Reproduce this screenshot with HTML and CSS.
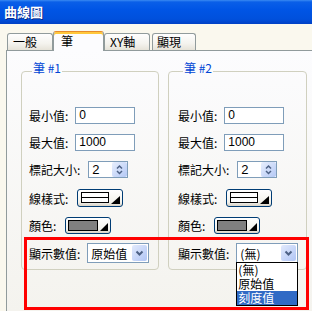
FILE: index.html
```html
<!DOCTYPE html>
<html>
  <head>
    <link rel="stylesheet" href="styles.css">
    <title>曲線圖</title>
  </head>

  <body>
    <div class="titlebar">曲線圖</div>

    <div class="client">
      <div class="tabs">
        <span class="tab tab-general">一般</span>
        <span class="tab tab-pen active">筆</span>
        <span class="tab tab-axis">XY軸</span>
        <span class="tab tab-show">顯現</span>
      </div>

      <div class="pane">
        <fieldset class="pen">
          <legend>筆 #1</legend>
          <div class="row"><span class="label">最小值:</span><span class="field">0</span></div>
          <div class="row"><span class="label">最大值:</span><span class="field">1000</span></div>
          <div class="row row-tall"><span class="label">標記大小:</span>
            <span class="spin">2<span class="spin-btn"><svg width="13" height="13" viewBox="0 0 13 13"><path d="M4 5.5 L6.5 3 L9 5.5" fill="none" stroke="#4d6185" stroke-width="1.5"/><path d="M4 8 L6.5 10.5 L9 8" fill="none" stroke="#4d6185" stroke-width="1.5"/></svg></span></span>
          </div>
          <div class="row"><span class="label">線樣式:</span>
            <span class="pick-btn pick-line"><svg width="44" height="16" viewBox="0 0 44 16"><rect x="3.5" y="2.5" width="27" height="10" fill="white" stroke="black"/><line x1="4" y1="7.5" x2="30" y2="7.5" stroke="black"/><path d="M42 6 L42 14 L33 14 Z" fill="black"/></svg></span>
          </div>
          <div class="row row-tight"><span class="label">顏色:</span>
            <span class="pick-btn pick-color"><svg width="44" height="15" viewBox="0 0 44 15"><rect x="2.5" y="2.5" width="29" height="10" fill="#808080" stroke="black"/><path d="M42 5 L42 13 L34 13 Z" fill="black"/></svg></span>
          </div>
          <div class="row"><span class="label">顯示數值:</span>
            <span class="select">原始值<span class="drop-btn"><svg width="13" height="14" viewBox="0 0 13 14"><path d="M3.5 5.5 L6.5 8.5 L9.5 5.5" fill="none" stroke="#4d6185" stroke-width="2"/></svg></span></span>
          </div>
        </fieldset>

        <fieldset class="pen pen-right">
          <legend>筆 #2</legend>
          <div class="row"><span class="label">最小值:</span><span class="field">0</span></div>
          <div class="row"><span class="label">最大值:</span><span class="field">1000</span></div>
          <div class="row row-tall"><span class="label">標記大小:</span>
            <span class="spin">2<span class="spin-btn"><svg width="13" height="13" viewBox="0 0 13 13"><path d="M4 5.5 L6.5 3 L9 5.5" fill="none" stroke="#4d6185" stroke-width="1.5"/><path d="M4 8 L6.5 10.5 L9 8" fill="none" stroke="#4d6185" stroke-width="1.5"/></svg></span></span>
          </div>
          <div class="row"><span class="label">線樣式:</span>
            <span class="pick-btn pick-line"><svg width="44" height="16" viewBox="0 0 44 16"><rect x="3.5" y="2.5" width="27" height="10" fill="white" stroke="black"/><line x1="4" y1="7.5" x2="30" y2="7.5" stroke="black"/><path d="M42 6 L42 14 L33 14 Z" fill="black"/></svg></span>
          </div>
          <div class="row row-tight"><span class="label">顏色:</span>
            <span class="pick-btn pick-color"><svg width="44" height="15" viewBox="0 0 44 15"><rect x="2.5" y="2.5" width="29" height="10" fill="#808080" stroke="black"/><path d="M42 5 L42 13 L34 13 Z" fill="black"/></svg></span>
          </div>
          <div class="row"><span class="label">顯示數值:</span>
            <span class="select">(無)<span class="drop-btn"><svg width="13" height="14" viewBox="0 0 13 14"><path d="M3.5 5.5 L6.5 8.5 L9.5 5.5" fill="none" stroke="#4d6185" stroke-width="2"/></svg></span>
              <ul class="droplist">
                <li>(無)</li>
                <li>原始值</li>
                <li class="picked">刻度值</li>
              </ul>
            </span>
          </div>
        </fieldset>

        <div class="mark"></div>
      </div>
    </div>
  </body>
</html>
```

FILE: styles.css
```css
body{
  margin: 0;
  width: 312px;
  height: 311px;
  overflow: hidden;
  background-color: #faf8ee;
  font-family: "Noto Sans CJK TC", sans-serif;
  font-size: 12px;
  color: black;
}

.titlebar{
  height: 24px;
  line-height: 24px;
  padding-left: 4px;
  background: linear-gradient(#3a8af2 0, #0a5fe8 2px, #0055e5 40%, #0050dc 80%, #0040c4 100%);
  color: white;
  font-size: 13px;
  font-weight: bold;
  text-shadow: 1px 1px #0a2a8a;
}

.client{
  padding-top: 7px;
}

.tabs{
  display: flex;
  align-items: flex-end;
  height: 19px;
  padding-left: 7px;
}

.tab{
  box-sizing: border-box;
  height: 17px;
  padding-left: 5px;
  line-height: 16px;
  border: 1px solid #919b9c;
  border-bottom: none;
  border-radius: 3px 3px 0 0;
  background: linear-gradient(#fefefe, #f4f3ee 60%, #e6e3d8);
  white-space: nowrap;
}

.tab-general{ width: 46px; }
.tab-pen{ width: 51px; padding-left: 7px; }
.tab-axis{ width: 46px; }
.tab-show{ width: 44px; margin-left: 2px; padding-left: 4px; }

.tab.active{
  position: relative;
  z-index: 1;
  height: 20px;
  margin-bottom: -1px;
  line-height: 17px;
  border-top-color: #e68b2c;
  background: #fcfcfe;
  box-shadow: inset 0 2px #ffc83c;
}

.pane{
  position: relative;
  display: flex;
  gap: 9px;
  height: 250px;
  margin-left: 6px;
  padding: 10px 0 0 14px;
  border-top: 1px solid #919b9c;
  border-left: 1px solid #919b9c;
  background: linear-gradient(#fcfcfe, #f4f3ee);
}

.pen{
  box-sizing: border-box;
  width: 138px;
  height: 209px;
  min-width: 0;
  margin: 0;
  padding: 26px 0 0 7px;
  border: 1px solid #d0d0bf;
  border-radius: 4px;
}

.pen-right{
  width: 139px;
  padding-left: 9px;
}

.pen legend{
  margin-left: 3px;
  padding: 0 1px 6px;
  line-height: 14px;
  color: #0046d5;
}

.pen-right legend{
  margin-left: 5px;
}

.row{
  display: flex;
  align-items: center;
  gap: 7px;
  margin-bottom: 10px;
}
.row-tall{ margin-bottom: 11px; }
.row-tight{ margin-bottom: 9px; }

.label{
  line-height: 17px;
  white-space: nowrap;
}

.field{
  box-sizing: border-box;
  width: 60px;
  height: 17px;
  padding-left: 3px;
  border: 1px solid #7f9db9;
  background-color: white;
  font-family: "Liberation Sans", sans-serif;
  font-size: 12px;
  line-height: 15px;
}

.spin{
  display: flex;
  justify-content: space-between;
  align-items: center;
  box-sizing: border-box;
  width: 40px;
  height: 17px;
  margin-left: 1px;
  padding: 0 0 0 3px;
  border: 1px solid #7f9db9;
  background-color: white;
  font-family: "Liberation Sans", sans-serif;
  font-size: 13px;
  line-height: 15px;
}

.spin-btn{
  display: flex;
  box-sizing: border-box;
  width: 15px;
  height: 15px;
  padding: 1px;
  border-radius: 2px;
  background: linear-gradient(135deg, #e8effd, #b4c8f5);
}

.pick-btn{
  display: block;
  box-sizing: border-box;
  width: 46px;
  border: 1px solid #003c74;
  border-radius: 3px;
  background: linear-gradient(#ffffff, #f3f2ec 75%, #d8d2c6);
  margin-left: 2px;
}
.pick-btn svg{ display: block; }
.pick-line{ height: 18px; }
.pick-color{ height: 17px; }

.select{
  position: relative;
  display: flex;
  justify-content: space-between;
  align-items: center;
  box-sizing: border-box;
  width: 62px;
  height: 20px;
  padding: 0 1px 0 3px;
  border: 1px solid #7f9db9;
  background-color: white;
  white-space: nowrap;
}

.drop-btn{
  display: flex;
  justify-content: center;
  align-items: center;
  width: 15px;
  height: 16px;
  border-radius: 2px;
  background: linear-gradient(135deg, #e2eafc, #b0c5f5);
}

.droplist{
  position: absolute;
  top: 18px;
  left: -1px;
  box-sizing: border-box;
  width: 62px;
  margin: 0;
  padding: 0;
  list-style: none;
  border: 1px solid black;
  background-color: white;
}

.droplist li{
  height: 14px;
  padding-left: 1px;
  line-height: 14px;
}

.droplist .picked{
  background-color: #316ac5;
  color: white;
}

.mark{
  position: absolute;
  left: 17px;
  top: 186px;
  box-sizing: border-box;
  width: 285px;
  height: 73px;
  border: 3px solid #ff0000;
}
```
